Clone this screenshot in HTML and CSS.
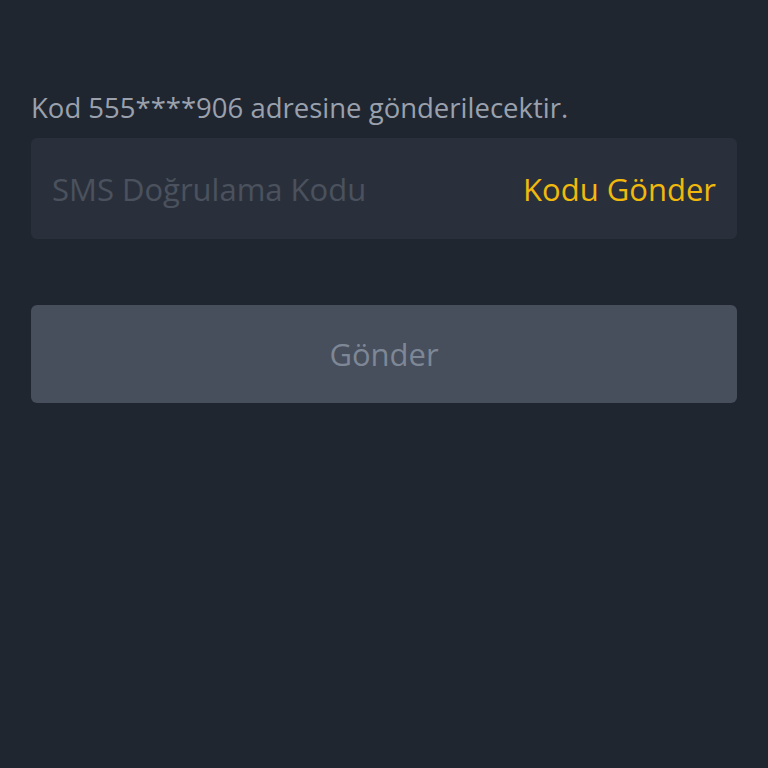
FILE: index.html
```html
<!DOCTYPE html>
<html lang="tr">
<head>
  <meta charset="UTF-8" />
  <meta name="viewport" content="width=device-width, initial-scale=1.0" />
  <title>SMS Doğrulama</title>
  <link rel="stylesheet" href="styles.css">
</head>
<body>
  <main class="verify">
    <p class="hint">Kod 555****906 adresine gönderilecektir.</p>
    <div class="code-field">
      <input type="text" class="code-input" placeholder="SMS Doğrulama Kodu" aria-label="SMS Doğrulama Kodu" />
      <button type="button" class="send-code">Kodu Gönder</button>
    </div>
    <button type="submit" class="submit" disabled>Gönder</button>
  </main>
</body>
</html>
```

FILE: styles.css
```css
:root {
  --bg-color: #1f2630;
  --field-bg: #2a303b;
  --button-bg: #474f5c;
  --text-muted: #9aa1ad;
  --placeholder: #4b525e;
  --accent: #f0b90b;
  --button-text: #7e8796;
}
* {
  box-sizing: border-box;
  margin: 0;
  padding: 0;
}
html,
body {
  height: 100%;
}
body {
  background-color: var(--bg-color);
  font-family: "Open Sans", Roboto, sans-serif;
  color: var(--text-muted);
}
.verify {
  padding: 92px 31px 0;
  display: flex;
  flex-direction: column;
}
.hint {
  font-size: 27.5px;
  line-height: 32px;
  color: var(--text-muted);
  margin-bottom: 14px;
}
.code-field {
  display: flex;
  align-items: center;
  height: 101px;
  padding: 0 21px;
  background-color: var(--field-bg);
  border-radius: 6px;
}
.code-input {
  flex: 1;
  min-width: 0;
  border: none;
  outline: none;
  background: transparent;
  font-family: inherit;
  font-size: 31px;
  color: var(--text-muted);
}
.code-input::placeholder {
  color: var(--placeholder);
}
.send-code {
  border: none;
  background: transparent;
  font-family: inherit;
  font-size: 31px;
  color: var(--accent);
  cursor: pointer;
}
.submit {
  margin-top: 66px;
  height: 98px;
  border: none;
  border-radius: 6px;
  background-color: var(--button-bg);
  color: var(--button-text);
  font-family: inherit;
  font-size: 31px;
}
```
